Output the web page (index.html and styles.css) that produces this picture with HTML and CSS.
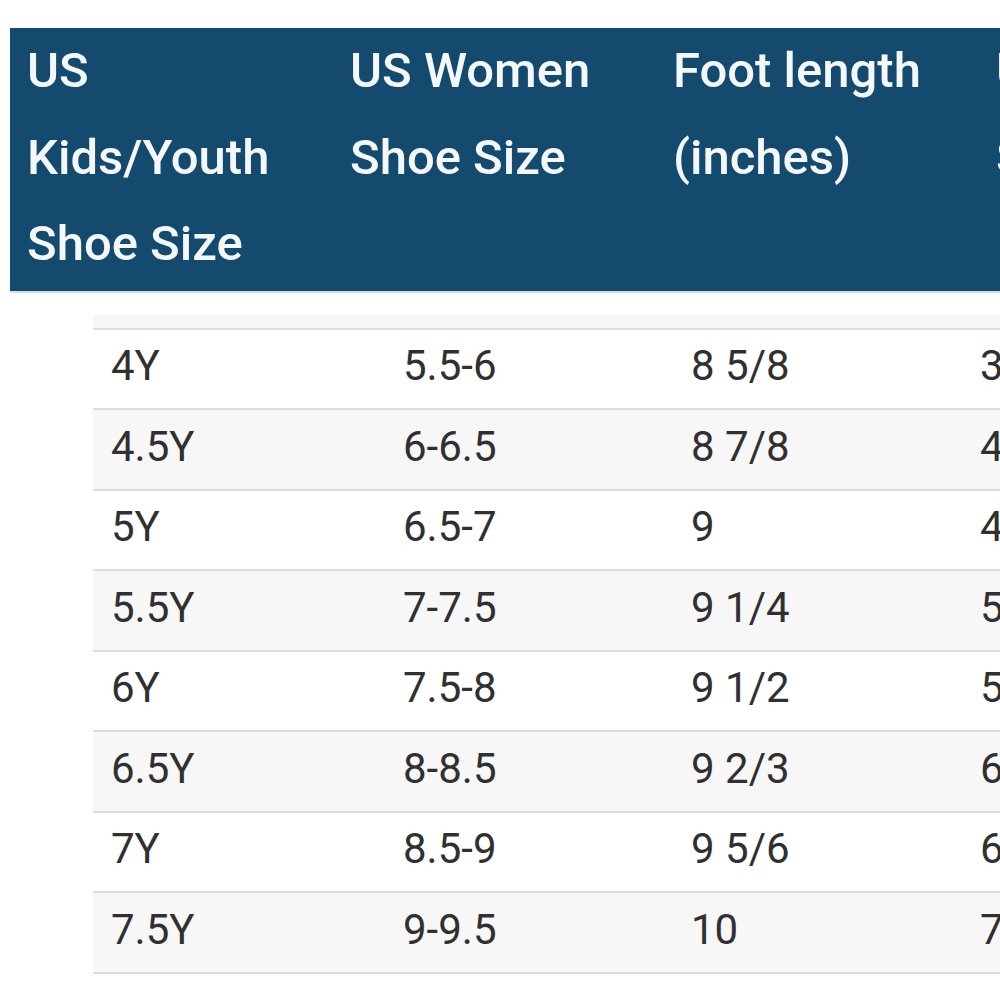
FILE: index.html
```html
<!DOCTYPE html>
<html lang="en">
<head>
<meta charset="utf-8">
<title>Size chart</title>
<link rel="stylesheet" href="styles.css">
</head>
<body>
<div class="page">
  <div class="head">
    <div class="hcell">US<br>Kids/Youth<br>Shoe Size</div>
    <div class="hcell">US Women<br>Shoe Size</div>
    <div class="hcell">Foot length<br>(inches)</div>
    <div class="hcell">US Men<br>Shoe Size</div>
  </div>
  <div class="body">
    <div class="row alt stub"></div>
    <div class="row"><span>4Y</span><span>5.5-6</span><span>8 5/8</span><span>3.5-4</span></div>
    <div class="row alt"><span>4.5Y</span><span>6-6.5</span><span>8 7/8</span><span>4-4.5</span></div>
    <div class="row"><span>5Y</span><span>6.5-7</span><span>9</span><span>4.5-5</span></div>
    <div class="row alt"><span>5.5Y</span><span>7-7.5</span><span>9 1/4</span><span>5-5.5</span></div>
    <div class="row"><span>6Y</span><span>7.5-8</span><span>9 1/2</span><span>5.5-6</span></div>
    <div class="row alt"><span>6.5Y</span><span>8-8.5</span><span>9 2/3</span><span>6-6.5</span></div>
    <div class="row"><span>7Y</span><span>8.5-9</span><span>9 5/6</span><span>6.5-7</span></div>
    <div class="row alt"><span>7.5Y</span><span>9-9.5</span><span>10</span><span>7-7.5</span></div>
  </div>
</div>
</body>
</html>
```

FILE: styles.css
```css
html, body {
  margin: 0;
  padding: 0;
  background: #ffffff;
}
.page {
  width: 1000px;
  height: 996px;
  overflow: hidden;
  padding-top: 28px;
  box-sizing: border-box;
  font-family: Roboto, "Liberation Sans", sans-serif;
}
.head {
  margin-left: 10px;
  width: 1400px;
  display: grid;
  grid-template-columns: 323px 323px 323px 323px;
  background: #134a6e;
  border-bottom: 2px solid #cfdfeb;
  padding: 0 0 3px 17px;
}
.hcell {
  color: #f4f8fb;
  font-weight: 500;
  font-size: 49px;
  line-height: 86.5px;
  white-space: nowrap;
}
.body {
  margin-top: 22px;
  margin-left: 93px;
  width: 1400px;
}
.row {
  display: grid;
  grid-template-columns: 292px 288px 289px 290px;
  height: 78.5px;
  border-bottom: 2px solid #dcdcdc;
  padding-left: 18px;
  align-items: center;
  color: #303030;
  font-size: 42px;
}
.row span {
  white-space: nowrap;
  padding-bottom: 6px;
}
.alt {
  background: #f7f7f7;
}
.stub {
  height: 13px;
}
```
